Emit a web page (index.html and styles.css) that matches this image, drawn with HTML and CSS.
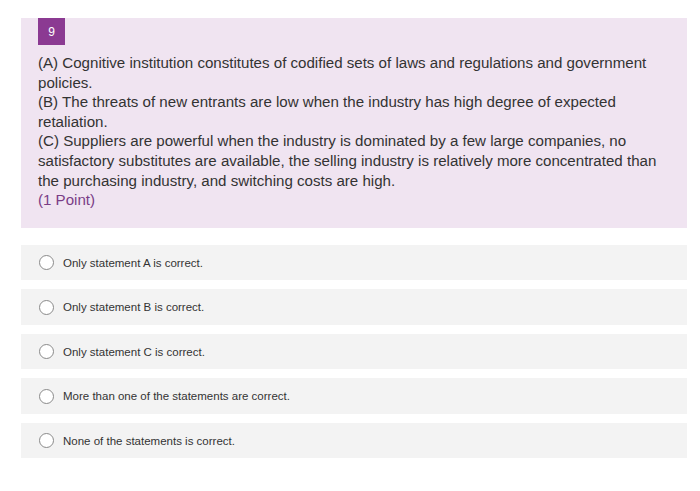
FILE: index.html
```html
<!DOCTYPE html>
<html>
<head>
<meta charset="utf-8">
<link rel="stylesheet" href="styles.css">
</head>
<body>
<div class="page">
  <section class="question">
    <div class="badge">9</div>
    <div class="qtext">
      <p>(A) Cognitive institution constitutes of codified sets of laws and regulations and government policies.</p>
      <p>(B) The threats of new entrants are low when the industry has high degree of expected retaliation.</p>
      <p>(C) Suppliers are powerful when the industry is dominated by a few large companies, no satisfactory substitutes are available, the selling industry is relatively more concentrated than the purchasing industry, and switching costs are high.</p>
      <p class="points">(1 Point)</p>
    </div>
  </section>
  <div class="options">
    <label class="option"><span class="radio"></span><span class="label">Only statement A is correct.</span></label>
    <label class="option"><span class="radio"></span><span class="label">Only statement B is correct.</span></label>
    <label class="option"><span class="radio"></span><span class="label">Only statement C is correct.</span></label>
    <label class="option"><span class="radio"></span><span class="label">More than one of the statements are correct.</span></label>
    <label class="option"><span class="radio"></span><span class="label">None of the statements is correct.</span></label>
  </div>
</div>
</body>
</html>
```

FILE: styles.css
```css
html, body {
  margin: 0;
  padding: 0;
  background: #ffffff;
}
body {
  font-family: "Liberation Sans", Arial, Helvetica, sans-serif;
  color: #333333;
}
.page {
  padding: 18px 13px 0 21px;
}
.question {
  background: #f0e4f1;
  padding: 0 19px 18px 17px;
}
.badge {
  width: 27px;
  height: 27px;
  background: #8b3a92;
  color: #ffffff;
  font-size: 12px;
  display: flex;
  align-items: center;
  justify-content: center;
}
.qtext {
  margin-top: 8px;
  font-size: 15.1px;
  line-height: 19.6px;
  color: #333333;
}
.qtext p {
  margin: 0;
}
.qtext .points {
  color: #7a3d86;
}
.options {
  margin-top: 17px;
  display: flex;
  flex-direction: column;
  gap: 9px;
}
.option {
  background: #f3f3f3;
  height: 35.5px;
  display: flex;
  align-items: center;
  padding-left: 18px;
}
.radio {
  width: 13px;
  height: 13px;
  border: 1.3px solid #8a8a8a;
  border-radius: 50%;
  background: #ffffff;
  flex: none;
}
.label {
  margin-left: 9px;
  font-size: 11.5px;
  color: #333333;
}
```
